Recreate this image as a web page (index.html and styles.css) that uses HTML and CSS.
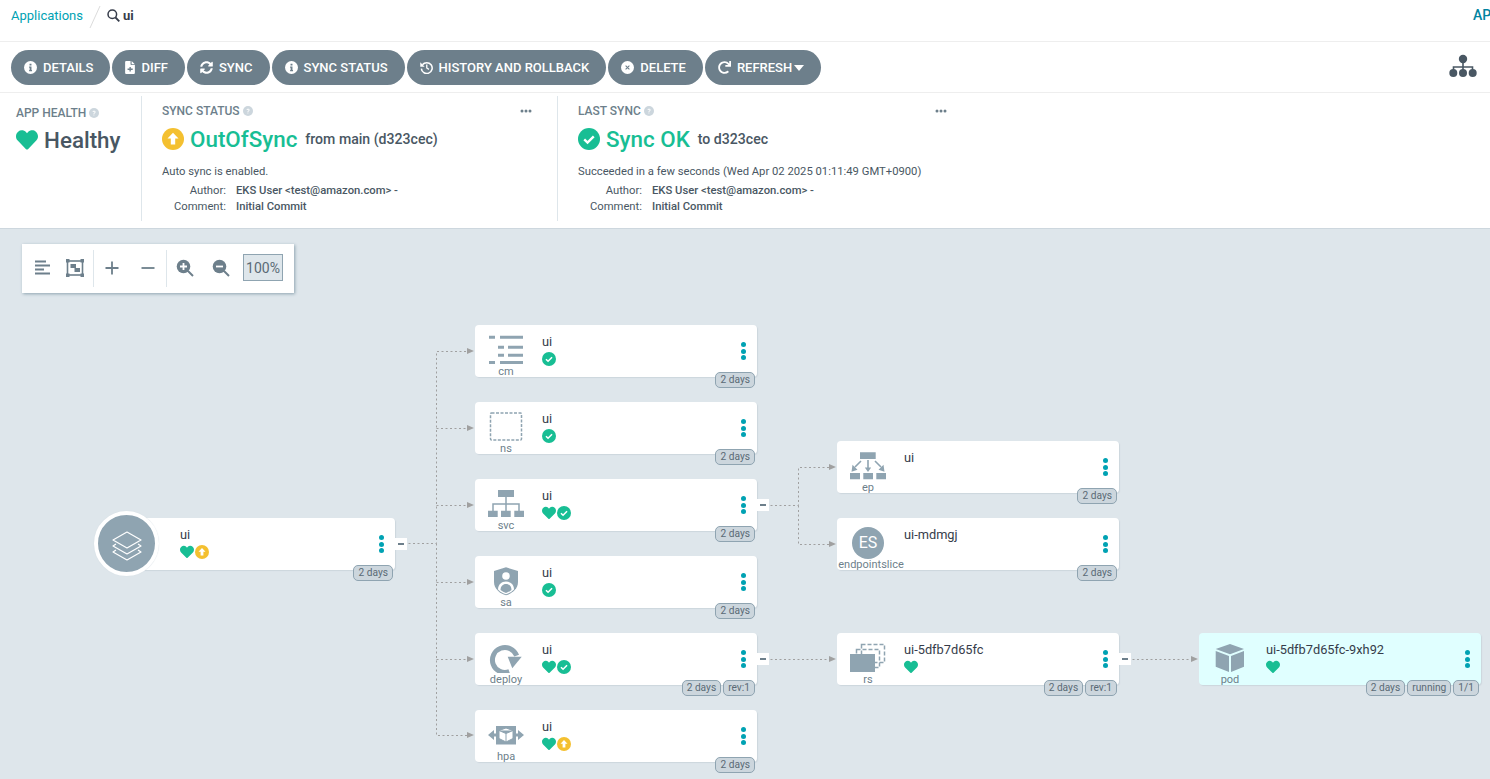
FILE: index.html
```html
<!DOCTYPE html>
<html lang="en">
<head>
<meta charset="utf-8">
<title>ui - Application Details</title>
<link rel="stylesheet" href="styles.css">
</head>
<body>
<svg class="defs" width="0" height="0" aria-hidden="true">
  <symbol id="heart" viewBox="0 0 512 512"><path fill="#18be94" d="M462.3 62.6C407.5 15.9 326 24.3 275.7 76.2L256 96.5l-19.7-20.3C186.1 24.3 104.5 15.9 49.7 62.6c-62.8 53.6-66.1 149.8-9.9 207.9l193.5 199.8c12.5 12.9 32.8 12.9 45.3 0l193.5-199.8c56.3-58.1 53-154.3-9.8-207.9z"/></symbol>
  <symbol id="check" viewBox="0 0 24 24"><circle cx="12" cy="12" r="12" fill="#18be94"/><path d="M6.8 12.4l3.6 3.5 6.8-6.8" fill="none" stroke="#fff" stroke-width="2.6"/></symbol>
  <symbol id="up" viewBox="0 0 24 24"><circle cx="12" cy="12" r="12" fill="#f4c030"/><path d="M12 5.2l6 6.3h-3.6v6.6H9.6v-6.6H6z" fill="#fff"/></symbol>
  <symbol id="info" viewBox="0 0 24 24"><circle cx="12" cy="12" r="12" fill="#fff"/><path d="M10.2 5h3.6v3.2h-3.6zM9.4 10h4.4v6.4h1v2.4H9.4v-2.4h1v-4H9.4z" fill="#6d7f8b"/></symbol>
  <symbol id="q" viewBox="0 0 24 24"><circle cx="12" cy="12" r="12" fill="#ccd6dd"/><path d="M8.4 9.4c.3-2 1.8-3 3.8-3 2.1 0 3.6 1.2 3.6 3 0 2.7-3 2.5-3 4.8h-2c0-3.300 2.900-3.100 2.900-4.800 0-.7-.6-1.200-1.500-1.200s-1.600.5-1.800 1.500zM10.800 15.600h2v2.200h-2z" fill="#fff"/></symbol>
  <symbol id="dots3" viewBox="0 0 12 4"><circle cx="2" cy="2" r="1.500" fill="#6d7f8b"/><circle cx="6" cy="2" r="1.500" fill="#6d7f8b"/><circle cx="10" cy="2" r="1.500" fill="#6d7f8b"/></symbol>
</svg>

<header class="topbar">
  <a class="crumb">Applications</a>
  <svg class="slash" width="12" height="24" viewBox="0 0 12 24"><path d="M1 23L11 1" stroke="#dcdcdc" fill="none"/></svg>
  <svg class="search" width="13" height="13" viewBox="0 0 13 13"><circle cx="5.300" cy="5.300" r="4.300" fill="none" stroke="#363c4a" stroke-width="1.500"/><path d="M8.500 8.500l3.800 3.800" stroke="#363c4a" stroke-width="1.800"/></svg>
  <span class="crumb-name">ui</span>
  <span class="top-right">AP</span>
</header>

<nav class="actions">
  <button class="btn"><svg class="ico" viewBox="0 0 24 24"><use href="#info"/></svg>DETAILS</button>
  <button class="btn"><svg class="ico ico-file" viewBox="0 0 18 24"><path d="M0 2a2 2 0 0 1 2-2h8v6a1.500 1.500 0 0 0 1.500 1.500H18V22a2 2 0 0 1-2 2H2a2 2 0 0 1-2-2zM12 0l6 6h-6z" fill="#fff"/><path d="M8 11h2.500v3H14v2.500h-3.500v3H8v-3H4.500V14H8z" fill="#6d7f8b"/></svg>DIFF</button>
  <button class="btn"><svg class="ico" viewBox="0 0 512 512"><path fill="#fff" d="M370.720 133.280C339.458 104.008 298.888 87.962 255.848 88c-77.458.068-144.328 53.178-162.791 126.850-1.344 5.363-6.122 9.150-11.651 9.150H24.103c-7.498 0-13.194-6.807-11.807-14.176C33.933 94.924 134.813 8 256 8c66.448 0 126.791 26.136 171.315 68.685L463.030 40.970C478.149 25.851 504 36.559 504 57.941V192c0 13.255-10.745 24-24 24H345.941c-21.382 0-32.090-25.851-16.971-40.971l41.750-41.749zM32 296h134.059c21.382 0 32.090 25.851 16.971 40.971l-41.750 41.750c31.262 29.273 71.835 45.319 114.876 45.280 77.418-.07 144.315-53.144 162.787-126.849 1.344-5.363 6.122-9.150 11.651-9.150h57.304c7.498 0 13.194 6.807 11.807 14.176C478.067 417.076 377.187 504 256 504c-66.448 0-126.791-26.136-171.315-68.685L48.970 471.030C33.851 486.149 8 475.441 8 454.059V320c0-13.255 10.745-24 24-24z"/></svg>SYNC</button>
  <button class="btn"><svg class="ico" viewBox="0 0 24 24"><use href="#info"/></svg>SYNC STATUS</button>
  <button class="btn"><svg class="ico" viewBox="0 0 24 24"><path d="M4.500 7A10 10 0 1 1 2.500 14" fill="none" stroke="#fff" stroke-width="2.800"/><path d="M0.500 2.500l8 8H0.500z" fill="#fff"/><path d="M12.500 6.500v6.300l4 2.700" fill="none" stroke="#fff" stroke-width="2.400"/></svg>HISTORY AND ROLLBACK</button>
  <button class="btn"><svg class="ico" viewBox="0 0 24 24"><circle cx="12" cy="12" r="12" fill="#fff"/><path d="M8.500 8.500l7 7M15.500 8.500l-7 7" stroke="#6d7f8b" stroke-width="2"/></svg>DELETE</button>
  <button class="btn"><svg class="ico" viewBox="0 0 512 512"><path fill="#fff" d="M500.330 0h-47.410a12 12 0 0 0-12 12.570l4 82.760A247.420 247.420 0 0 0 256 8C119.340 8 7.900 119.530 8 256.190 8.100 393.070 119.100 504 256 504a247.100 247.100 0 0 0 166.180-63.910 12 12 0 0 0 .48-17.430l-34-34a12 12 0 0 0-16.380-.55A176 176 0 1 1 402.100 157.800l-101.530-4.870a12 12 0 0 0-12.570 12v47.410a12 12 0 0 0 12 12h200.330a12 12 0 0 0 12-12V12a12 12 0 0 0-12-12z"/></svg>REFRESH<svg class="caret" width="10" height="6" viewBox="0 0 10 6"><path d="M0 0h10L5 6z" fill="#fff"/></svg></button>
  <svg class="tree" width="28" height="24" viewBox="0 0 28 24"><path d="M14 4v14M4.500 18v-5h19v5" fill="none" stroke="#495763" stroke-width="1.600"/><circle cx="14" cy="5" r="4.200" fill="#495763"/><circle cx="4.300" cy="19" r="4" fill="#495763"/><circle cx="14" cy="19" r="4" fill="#495763"/><circle cx="23.700" cy="19" r="4" fill="#495763"/></svg>
</nav>

<section class="summary">
  <div class="panel panel-health">
    <h3 class="label label-health">APP HEALTH <svg class="qmark" viewBox="0 0 24 24"><use href="#q"/></svg></h3>
    <div class="status"><svg class="big-ico" viewBox="0 0 512 512"><use href="#heart"/></svg><span class="status-text dark">Healthy</span></div>
  </div>
  <div class="panel panel-sync">
    <div class="panel-head">
      <h3 class="label">SYNC STATUS <svg class="qmark" viewBox="0 0 24 24"><use href="#q"/></svg></h3>
      <svg class="more" viewBox="0 0 12 4"><use href="#dots3"/></svg>
    </div>
    <div class="status"><svg class="big-ico" viewBox="0 0 24 24"><use href="#up"/></svg><span class="status-text">OutOfSync</span><span class="status-sub">from main (d323cec)</span></div>
    <p class="desc">Auto sync is enabled.</p>
    <dl class="meta"><dt>Author:</dt><dd>EKS User &lt;test@amazon.com&gt; -</dd><dt>Comment:</dt><dd>Initial Commit</dd></dl>
  </div>
  <div class="panel panel-last">
    <div class="panel-head">
      <h3 class="label">LAST SYNC <svg class="qmark" viewBox="0 0 24 24"><use href="#q"/></svg></h3>
      <svg class="more" viewBox="0 0 12 4"><use href="#dots3"/></svg>
    </div>
    <div class="status"><svg class="big-ico" viewBox="0 0 24 24"><use href="#check"/></svg><span class="status-text">Sync OK</span><span class="status-sub">to d323cec</span></div>
    <p class="desc">Succeeded in a few seconds (Wed Apr 02 2025 01:11:49 GMT+0900)</p>
    <dl class="meta"><dt>Author:</dt><dd>EKS User &lt;test@amazon.com&gt; -</dd><dt>Comment:</dt><dd>Initial Commit</dd></dl>
  </div>
</section>

<main class="canvas">
  <div class="graph-tools">
    <div class="tool-group">
      <svg class="tool" viewBox="0 0 18 18"><path d="M2 2.500h11M2 6.500h15M2 10.500h9M2 14.500h15" stroke="#6d7f8b" stroke-width="2" fill="none"/></svg>
      <svg class="tool" viewBox="0 0 18 18"><rect x="1.500" y="2" width="15" height="14" fill="none" stroke="#6d7f8b" stroke-width="1.600"/><path d="M0 0h3.500v3.500H0zM14.500 0H18v3.500h-3.500zM0 14.500h3.500V18H0zM14.500 14.500H18V18h-3.500z" fill="#6d7f8b"/><path d="M4.500 5h5.500v4h4v4H8.500V9h-4z" fill="#6d7f8b"/></svg>
    </div>
    <div class="tool-group">
      <svg class="tool" viewBox="0 0 18 18"><path d="M9 2.500v13M2.500 9h13" stroke="#6d7f8b" stroke-width="1.800"/></svg>
      <svg class="tool" viewBox="0 0 18 18"><path d="M2.500 9h13" stroke="#6d7f8b" stroke-width="1.800"/></svg>
    </div>
    <div class="tool-group tool-group-last">
      <svg class="tool" viewBox="0 0 18 18"><circle cx="7.500" cy="7.500" r="6.800" fill="#6d7f8b"/><path d="M12 12l5 5" stroke="#6d7f8b" stroke-width="2"/><path d="M7.500 4v7M4 7.500h7" stroke="#fff" stroke-width="1.800"/></svg>
      <svg class="tool" viewBox="0 0 18 18"><circle cx="7.500" cy="7.500" r="6.800" fill="#6d7f8b"/><path d="M12 12l5 5" stroke="#6d7f8b" stroke-width="2"/><path d="M4 7.500h7" stroke="#fff" stroke-width="1.800"/></svg>
      <span class="zoom-box">100%</span>
    </div>
  </div>

  <svg class="edges" width="1490" height="550" viewBox="0 229 1490 550">
    <g fill="none" stroke="#a0a0a0" stroke-dasharray="2 2.500" transform="translate(.5 .5)">
      <path d="M408 543H436V351H468"/>
      <path d="M436 428H468"/>
      <path d="M436 505H468"/>
      <path d="M436 582H468"/>
      <path d="M436 543V735H468"/>
      <path d="M436 659H468"/>
      <path d="M770 505H798V467H830"/>
      <path d="M798 505V544H830"/>
      <path d="M770 659H830"/>
      <path d="M1132 659H1192"/>
    </g>
    <g fill="#a0a0a0">
      <path d="M467 348l7 3-7 3zM467 425l7 3-7 3zM467 502l7 3-7 3zM467 579l7 3-7 3zM467 656l7 3-7 3zM467 732l7 3-7 3z"/>
      <path d="M829 464l7 3-7 3zM829 541l7 3-7 3zM829 656l7 3-7 3zM1191 656l7 3-7 3z"/>
    </g>
  </svg>

  <article class="node node-root">
    <div class="kind kind-root"><div class="root-disc"><svg width="34" height="34" viewBox="0 0 34 34"><g fill="none" stroke="#fff" stroke-width="1.200" stroke-linejoin="round"><path d="M17 5L31 13 17 21 3 13z"/><path d="M6 17L3 19 17 27 31 19 28 17"/><path d="M6 23L3 25 17 33 31 25 28 23"/></g></svg></div></div>
    <div class="info"><div class="name">ui</div><div class="icons"><svg class="s" viewBox="0 0 512 512"><use href="#heart"/></svg><svg class="s" viewBox="0 0 24 24"><use href="#up"/></svg></div></div>
    <div class="kebab"><i></i><i></i><i></i></div>
    <span class="collapse"></span>
    <div class="tags"><span class="tag">2 days</span></div>
  </article>

  <article class="node node-cm">
    <div class="kind"><svg class="glyph" viewBox="0 0 40 34"><path fill="#8fa4b1" d="M3 4.700h6v3H3zM14 4.700h23v3H14zM12 14.700h6v3h-6zM22 14.700h15v3H22zM12 22.700h6v3h-6zM22 22.700h15v3H22zM3 30h6v3H3zM14 30h23v3H14z"/></svg><span class="kind-name">cm</span></div>
    <div class="info"><div class="name">ui</div><div class="icons"><svg class="s" viewBox="0 0 24 24"><use href="#check"/></svg></div></div>
    <div class="kebab"><i></i><i></i><i></i></div>
    <div class="tags"><span class="tag">2 days</span></div>
  </article>

  <article class="node node-ns">
    <div class="kind"><svg class="glyph" viewBox="0 0 40 34"><rect x="4.500" y="5" width="31" height="27" rx="1" fill="none" stroke="#8fa4b1" stroke-width="1.500" stroke-dasharray="3 1.500"/></svg><span class="kind-name">ns</span></div>
    <div class="info"><div class="name">ui</div><div class="icons"><svg class="s" viewBox="0 0 24 24"><use href="#check"/></svg></div></div>
    <div class="kebab"><i></i><i></i><i></i></div>
    <div class="tags"><span class="tag">2 days</span></div>
  </article>

  <article class="node node-svc">
    <div class="kind"><svg class="glyph" viewBox="0 0 40 34"><path fill="#8fa4b1" d="M12 5h16v7H12zM2 25.700h9.700V32H2zM15 25.700h9.700V32H15zM28.300 25.700H38V32h-9.700z"/><path d="M20 12v14M7 26v-7h26v7" fill="none" stroke="#8fa4b1" stroke-width="1.500"/></svg><span class="kind-name">svc</span></div>
    <div class="info"><div class="name">ui</div><div class="icons"><svg class="s" viewBox="0 0 512 512"><use href="#heart"/></svg><svg class="s" viewBox="0 0 24 24"><use href="#check"/></svg></div></div>
    <div class="kebab"><i></i><i></i><i></i></div>
    <span class="collapse"></span>
    <div class="tags"><span class="tag">2 days</span></div>
  </article>

  <article class="node node-sa">
    <div class="kind"><svg class="glyph" viewBox="0 0 40 34"><path fill="#8fa4b1" d="M20 5.300L32 9v11c0 7-6 11.500-12 13.300C14 31.500 8 27 8 20V9z"/><circle cx="20" cy="14" r="3.800" fill="#fff"/><path d="M12 27.500c0-5 3.500-8 8-8s8 3 8 8c-2.500 2.500-5 3.800-8 4.700-3-.9-5.500-2.200-8-4.700z" fill="#fff"/><path d="M14.500 28c0-3.500 2.200-6 5.500-6s5.500 2.500 5.500 6c-1.700 1.300-3.500 2.300-5.500 2.900-2-.6-3.800-1.600-5.500-2.900z" fill="#8fa4b1"/></svg><span class="kind-name">sa</span></div>
    <div class="info"><div class="name">ui</div><div class="icons"><svg class="s" viewBox="0 0 24 24"><use href="#check"/></svg></div></div>
    <div class="kebab"><i></i><i></i><i></i></div>
    <div class="tags"><span class="tag">2 days</span></div>
  </article>

  <article class="node node-deploy">
    <div class="kind"><svg class="glyph" viewBox="0 0 40 34"><path d="M30.700 16.700A12.500 12.500 0 1 0 23.300 32.700" fill="none" stroke="#8fa4b1" stroke-width="5"/><path d="M21.700 17.700h14L26.300 29.300z" fill="#8fa4b1"/></svg><span class="kind-name">deploy</span></div>
    <div class="info"><div class="name">ui</div><div class="icons"><svg class="s" viewBox="0 0 512 512"><use href="#heart"/></svg><svg class="s" viewBox="0 0 24 24"><use href="#check"/></svg></div></div>
    <div class="kebab"><i></i><i></i><i></i></div>
    <span class="collapse"></span>
    <div class="tags"><span class="tag">2 days</span><span class="tag">rev:1</span></div>
  </article>

  <article class="node node-hpa">
    <div class="kind"><svg class="glyph" viewBox="0 0 40 34"><path d="M2 19l6-5v10zM38 19l-6-5v10z" fill="#8fa4b1"/><path d="M7 17.500h4v3H7zM29 17.500h4v3h-4z" fill="#8fa4b1"/><rect x="10" y="10" width="20" height="18.500" fill="#8fa4b1"/><path d="M20 12l7 2.500v8L20 26l-7-3.500v-8zM13 14.500l7 3 7-3M20 17.500V26" fill="#fff" stroke="#8fa4b1" stroke-width="1"/></svg><span class="kind-name">hpa</span></div>
    <div class="info"><div class="name">ui</div><div class="icons"><svg class="s" viewBox="0 0 512 512"><use href="#heart"/></svg><svg class="s" viewBox="0 0 24 24"><use href="#up"/></svg></div></div>
    <div class="kebab"><i></i><i></i><i></i></div>
    <div class="tags"><span class="tag">2 days</span></div>
  </article>

  <article class="node node-ep">
    <div class="kind"><svg class="glyph" viewBox="0 0 40 34"><path fill="#8fa4b1" d="M12 5.300h15.700V12H12zM2 26h10v6.300H2zM15.300 26H25v6.300h-9.700zM28.300 26H38v6.300h-9.700z"/><path d="M20 13v9M13 14l-6 6M27 14l6 6" stroke="#8fa4b1" stroke-width="1.600" fill="none"/><path d="M16.800 20.500h6.400L20 25zM4.500 17.800l5 5-6 2zM35.500 17.800l-5 5 6 2z" fill="#8fa4b1"/></svg><span class="kind-name">ep</span></div>
    <div class="info"><div class="name">ui</div></div>
    <div class="kebab"><i></i><i></i><i></i></div>
    <div class="tags"><span class="tag">2 days</span></div>
  </article>

  <article class="node node-es">
    <div class="kind"><div class="es">ES</div><span class="kind-name">endpointslice</span></div>
    <div class="info"><div class="name">ui-mdmgj</div></div>
    <div class="kebab"><i></i><i></i><i></i></div>
    <div class="tags"><span class="tag">2 days</span></div>
  </article>

  <article class="node node-rs">
    <div class="kind"><svg class="glyph" viewBox="0 0 40 34"><g fill="none" stroke="#8fa4b1" stroke-width="1.500" stroke-dasharray="4 2"><rect x="13.500" y="5.500" width="23" height="18"/><rect x="8.500" y="10.500" width="23" height="18"/></g><rect x="2" y="15" width="25" height="18" fill="#8fa4b1"/></svg><span class="kind-name">rs</span></div>
    <div class="info"><div class="name">ui-5dfb7d65fc</div><div class="icons"><svg class="s" viewBox="0 0 512 512"><use href="#heart"/></svg></div></div>
    <div class="kebab"><i></i><i></i><i></i></div>
    <span class="collapse"></span>
    <div class="tags"><span class="tag">2 days</span><span class="tag">rev:1</span></div>
  </article>

  <article class="node node-pod">
    <div class="kind"><svg class="glyph" viewBox="0 0 40 34"><path fill="#8fa4b1" d="M20 5l14 5-14 5.300L5.700 10zM5.700 12L19 17v16L5.700 27.700zM21 17l13-5v15.700L21 33z"/></svg><span class="kind-name">pod</span></div>
    <div class="info"><div class="name">ui-5dfb7d65fc-9xh92</div><div class="icons"><svg class="s" viewBox="0 0 512 512"><use href="#heart"/></svg></div></div>
    <div class="kebab"><i></i><i></i><i></i></div>
    <div class="tags"><span class="tag">2 days</span><span class="tag">running</span><span class="tag">1/1</span></div>
  </article>
</main>
</body>
</html>
```
FILE: styles.css
```css
* { box-sizing: border-box; }
html, body { height: 100%; }
body {
  margin: 0;
  display: flex;
  flex-direction: column;
  overflow: hidden;
  background: #fff;
  color: #363c4a;
  font-family: Roboto, "Liberation Sans", sans-serif;
}
.defs { position: absolute; }

/* top bar */
.topbar {
  height: 42px;
  flex: none;
  display: flex;
  align-items: flex-start;
  padding: 5px 0 0 11px;
  border-bottom: 1px solid #eee;
  overflow: hidden;
}
.crumb { font-size: 13px; line-height: 21px; color: #00a2b3; }
.slash { margin: 0 0 0 6px; }
.search { margin: 4px 0 0 6px; }
.crumb-name { font-size: 13px; font-weight: 700; line-height: 21px; margin-left: 3px; }
.top-right { margin-left: auto; font-size: 14px; font-weight: 500; line-height: 21px; color: #0083a0; width: 17px; white-space: nowrap; }

/* actions */
.actions {
  height: 51px;
  flex: none;
  display: flex;
  align-items: flex-start;
  gap: 2px;
  padding: 8px 13px 0 11px;
  border-bottom: 1px solid #eee;
}
.btn {
  height: 35px;
  display: flex;
  align-items: center;
  gap: 6px;
  padding: 0 17px 0 13px;
  border: 0;
  border-radius: 17.5px;
  background: #6d7f8b;
  color: #fff;
  font: 500 13px Roboto, sans-serif;
  white-space: nowrap;
}
.ico { width: 13px; height: 13px; flex: none; }
.ico-file { width: 10px; }
.caret { margin: 1px 0 0 -4px; }
.tree { margin: 4px 0 0 auto; }

/* summary */
.summary {
  height: 136px;
  flex: none;
  display: flex;
  padding-top: 3px;
  border-bottom: 1px solid #cdd7de;
}
.panel { height: 125px; }
.panel-health { width: 142px; padding: 9px 0 0 16px; border-right: 1px solid #dee6eb; }
.panel-sync { width: 416px; padding: 7px 25px 0 20px; border-right: 1px solid #dee6eb; }
.panel-last { width: 414px; padding: 7px 25px 0 20px; }
.panel-head { display: flex; justify-content: space-between; align-items: center; }
.label {
  margin: 0;
  display: flex;
  align-items: center;
  gap: 3px;
  font-size: 12px;
  font-weight: 500;
  line-height: 16px;
  color: #6d7f8b;
}
.qmark { width: 10px; height: 10px; }
.more { width: 12px; height: 4px; }
.status { display: flex; align-items: center; height: 26px; margin-top: 7px; }
.panel-health .status { margin-top: 6px; }
.big-ico { width: 22px; height: 22px; flex: none; margin-right: 6px; }
.status-text { font-size: 22.400px; font-weight: 500; line-height: 26px; color: #18be94; }
.status-text.dark { color: #495763; }
.status-sub { margin-left: 8px; font-size: 14.100px; font-weight: 500; color: #495763; }
.desc { margin: 12px 0 0; font-size: 11.250px; line-height: 16px; color: #495763; }
.meta {
  margin: 3px 0 0;
  display: grid;
  grid-template-columns: 64px auto;
  column-gap: 10px;
  font-size: 11.250px;
  line-height: 16px;
  color: #495763;
}
.meta dt { text-align: right; }
.meta dd { margin: 0; font-weight: 500; }

/* canvas */
.canvas {
  position: relative;
  flex: 1;
  overflow: hidden;
  background: #dee6eb;
}
.edges { position: absolute; left: 0; top: 0; }

.graph-tools {
  position: absolute;
  left: 22px;
  top: 15px;
  z-index: 2;
  height: 49px;
  display: flex;
  align-items: center;
  padding: 0 11px 0 0;
  background: #fff;
  box-shadow: 1px 1px 3px #8fa4b1;
}
.tool-group { display: flex; align-items: center; height: 37px; gap: 15px; padding-left: 11px; border-right: 1px solid #dee6eb; width: 72px; flex: none; }
.tool-group:nth-child(2) { width: 73px; padding-left: 9px; gap: 18px; }
.tool-group-last { border-right: 0; width: auto; padding-left: 9px; gap: 18px; }
.tool { width: 18px; height: 18px; flex: none; margin-top: -2px; }
.zoom-box {
  width: 40px;
  height: 27px;
  margin: -2px 0 0 -5px;
  display: flex;
  align-items: center;
  justify-content: center;
  background: #dee6eb;
  border: 1px solid #8fa4b1;
  font-size: 14px;
  color: #5a6a75;
}

/* nodes */
.node {
  position: absolute;
  z-index: 1;
  width: 282px;
  height: 52px;
  display: flex;
  background: #fff;
  border-radius: 4px;
  box-shadow: 1px 1px 1px #ccd6dd;
}
.node-cm { left: 475px; top: 96px; }
.node-ns { left: 475px; top: 173px; }
.node-svc { left: 475px; top: 250px; }
.node-sa { left: 475px; top: 327px; }
.node-deploy { left: 475px; top: 404px; }
.node-hpa { left: 475px; top: 481px; }
.node-ep { left: 837px; top: 212px; }
.node-es { left: 837px; top: 289px; }
.node-rs { left: 837px; top: 404px; }
.node-pod { left: 1199px; top: 404px; background: #e0ffff; }
.node-root { left: 126px; top: 289px; width: 269px; }

.kind { width: 62px; flex: none; position: relative; display: flex; flex-direction: column; align-items: center; padding-top: 6px; }
.glyph { width: 40px; height: 34px; flex: none; }
.kind-name { position: absolute; left: -10px; right: -10px; top: 40px; text-align: center; font-size: 11px; line-height: 13px; color: #6d7f8b; }
.node-es .kind-name { left: -7px; right: -13px; }
.es {
  width: 32px;
  height: 32px;
  margin-top: 3px;
  border-radius: 50%;
  background: #8fa4b1;
  color: #fff;
  font-size: 16px;
  line-height: 32px;
  text-align: center;
}
.kind-root { width: 49px; }
.root-disc {
  position: absolute;
  left: -32px;
  top: -7px;
  width: 65px;
  height: 65px;
  display: flex;
  align-items: center;
  justify-content: center;
  border-radius: 50%;
  background: #8fa4b1;
  border: 4px solid #fff;
  box-shadow: 0 0 1px #ccd6dd;
}
.info { flex: 1; min-width: 0; padding: 9px 0 0 5px; }
.name { font-size: 12.800px; line-height: 16px; color: #363c4a; }
.icons { display: flex; gap: 1px; margin-top: 2px; height: 14px; }
.s { width: 14px; height: 14px; flex: none; }
.kebab { width: 27px; flex: none; display: flex; flex-direction: column; align-items: center; justify-content: center; gap: 1.500px; }
.kebab i { width: 5px; height: 5px; border-radius: 50%; background: #00a2b3; }
.collapse {
  position: absolute;
  left: 100%;
  top: 20px;
  width: 12px;
  height: 12px;
  display: flex;
  align-items: center;
  justify-content: center;
  background: #fff;
}
.collapse::before { content: ""; width: 6px; height: 2px; background: #6d7f8b; }
.tags {
  position: absolute;
  right: 2px;
  top: 47px;
  display: flex;
  gap: 2px;
}
.tag {
  height: 16px;
  padding: 0 4px;
  border: 1px solid #8fa4b1;
  border-radius: 5px;
  background: #ccd6dd;
  color: #5a6a75;
  font-size: 10.200px;
  line-height: 14px;
  white-space: nowrap;
}
```
